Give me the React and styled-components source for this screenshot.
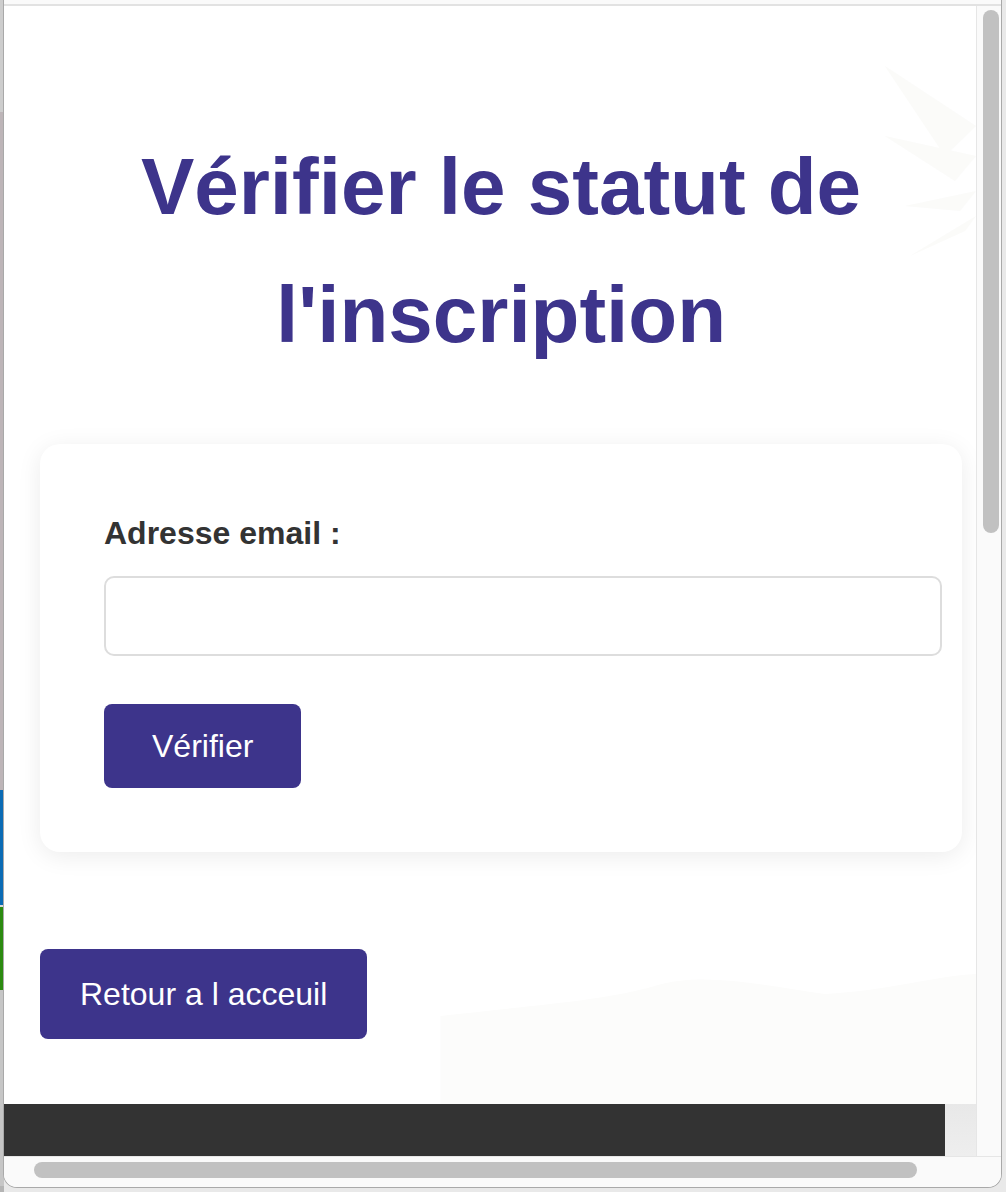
import React, { useState } from "react";
import styled, { createGlobalStyle } from "styled-components";

const GlobalStyle = createGlobalStyle`
  html, body {
    margin: 0;
    padding: 0;
  }
  body {
    width: 1006px;
    height: 1192px;
    overflow: hidden;
    font-family: "Liberation Sans", Arial, sans-serif;
    background-color: #e9e9e9;
    background-image: linear-gradient(
      to bottom,
      #cdcdcd 0 112px,
      #bdb5b8 112px 790px,
      #0a6bb5 790px 905px,
      #d9d9d9 905px 907px,
      #2b8a10 907px 990px,
      #c6c6c6 990px 1186px,
      #b4b4b4 1186px
    );
    background-size: 4px 100%;
    background-repeat: no-repeat;
  }
`;

const Desk = styled.div`
  display: flex;
  width: 1006px;
  height: 1192px;
  padding: 0 4px 4px 3px;
  box-sizing: border-box;
`;

const Window = styled.div`
  flex: 1;
  display: flex;
  flex-direction: column;
  background: #fafafa;
  border: 1px solid #a9a9a9;
  border-top: none;
  border-radius: 0 0 14px 14px;
  overflow: hidden;
  padding-top: 4px;
`;

const Main = styled.div`
  flex: 1;
  display: flex;
  min-height: 0;
  border-top: 2px solid #e2e2e2;
`;

const Viewport = styled.div`
  position: relative;
  flex: 1;
  overflow: hidden;
  background: #ffffff;
`;

const VTrack = styled.div`
  width: 25px;
  display: flex;
  flex-direction: column;
  border-left: 1px solid #e6e6e6;
  background: #fafafa;
  padding: 4px 3px 0 6px;
  box-sizing: border-box;
`;

const VThumb = styled.div`
  width: 16px;
  height: 523px;
  border-radius: 8px;
  background: #c1c1c1;
`;

const HTrack = styled.div`
  height: 31px;
  display: flex;
  align-items: center;
  border-top: 1px solid #e6e6e6;
  background: #fafafa;
  padding: 0 0 4px 30px;
  box-sizing: border-box;
`;

const HThumb = styled.div`
  width: 883px;
  height: 16px;
  border-radius: 8px;
  background: #c1c1c1;
`;

const Backdrop = styled.svg`
  position: absolute;
  inset: 0;
  width: 100%;
  height: 100%;
  pointer-events: none;
`;

const Page = styled.div`
  position: relative;
  display: flex;
  flex-direction: column;
  min-height: 100%;
`;

const Container = styled.div`
  width: 922px;
  margin-left: 36px;
  display: flex;
  flex-direction: column;
  align-items: flex-start;
`;

const Title = styled.h1`
  align-self: stretch;
  margin: 117px 0 65px;
  text-align: center;
  font-size: 80px;
  line-height: 128px;
  font-weight: 700;
  color: #3d348b;
`;

const Card = styled.form`
  align-self: stretch;
  display: flex;
  flex-direction: column;
  align-items: flex-start;
  padding: 64px;
  background: #ffffff;
  border-radius: 20px;
  box-shadow: 0 4px 24px rgba(0, 0, 0, 0.08);
`;

const Label = styled.label`
  font-size: 32px;
  line-height: 51px;
  font-weight: 700;
  color: #333333;
  margin-bottom: 17px;
`;

const Input = styled.input`
  width: 100%;
  height: 36px;
  padding: 20px;
  border: 2px solid #dddddd;
  border-radius: 10px;
  font-family: inherit;
  font-size: 32px;
  color: #333333;
  background: #ffffff;
  outline: none;
  margin: 0 0 48px;
`;

const Button = styled.button`
  display: inline-flex;
  align-items: center;
  justify-content: center;
  height: ${(p) => p.$h}px;
  padding: 0 ${(p) => p.$px}px;
  border: none;
  border-radius: 8px;
  background: #3d348b;
  color: #ffffff;
  font-family: inherit;
  font-size: 32px;
  cursor: pointer;
`;

const BackButton = styled(Button)`
  margin-top: 97px;
`;

const FooterRow = styled.div`
  display: flex;
  margin-top: 65px;
  height: 120px;
`;

const Footer = styled.footer`
  width: 941px;
  background: #333333;
`;

const FooterGap = styled.div`
  flex: 1;
  background: linear-gradient(to bottom, #e8e8e8, #f6f6f6);
`;

export default function App() {
  const [email, setEmail] = useState("");

  return (
    <>
      <GlobalStyle />
      <Desk>
        <Window>
          <Main>
            <Viewport>
              <Backdrop viewBox="0 0 971 1150" preserveAspectRatio="none">
                <g fill="#f8f8f5" opacity="0.5">
                  <polygon points="971,120 880,60 940,150" />
                  <polygon points="971,150 880,130 950,175" />
                  <polygon points="971,185 900,200 955,205" />
                  <polygon points="971,210 905,250 960,225" />
                </g>
                <path
                  d="M436 1010 C 520 1000, 600 995, 650 980 C 700 965, 760 980, 820 988 C 880 985, 930 970, 971 968 L 971 1098 L 436 1098 Z"
                  fill="#fcfcfb"
                />
              </Backdrop>
              <Page>
                <Container>
                  <Title>
                    Vérifier le statut de
                    <br />
                    l'inscription
                  </Title>
                  <Card onSubmit={(e) => e.preventDefault()}>
                    <Label htmlFor="email">Adresse email :</Label>
                    <Input
                      id="email"
                      type="email"
                      value={email}
                      onChange={(e) => setEmail(e.target.value)}
                    />
                    <Button type="submit" $h={84} $px={48}>
                      Vérifier
                    </Button>
                  </Card>
                  <BackButton type="button" $h={90} $px={40}>
                    Retour a l acceuil
                  </BackButton>
                </Container>
                <FooterRow>
                  <Footer />
                  <FooterGap />
                </FooterRow>
              </Page>
            </Viewport>
            <VTrack>
              <VThumb />
            </VTrack>
          </Main>
          <HTrack>
            <HThumb />
          </HTrack>
        </Window>
      </Desk>
    </>
  );
}
